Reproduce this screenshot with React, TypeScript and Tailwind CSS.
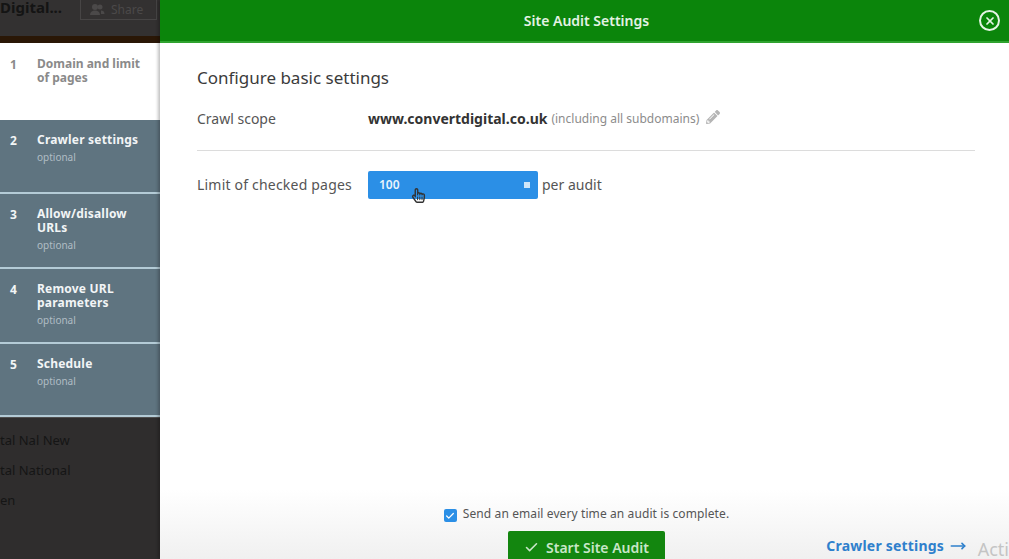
import { Check, MoveRight, X } from "lucide-react";
import { FaPencilAlt, FaRegHandPointer } from "react-icons/fa";

const font = { fontFamily: '"Noto Sans", "Open Sans", sans-serif' };

type Step = { num: number; title: string[]; height: string };

const steps: Step[] = [
  { num: 2, title: ["Crawler settings"], height: "h-[74px]" },
  { num: 3, title: ["Allow/disallow", "URLs"], height: "h-[75px]" },
  { num: 4, title: ["Remove URL", "parameters"], height: "h-[75px]" },
  { num: 5, title: ["Schedule"], height: "h-[73px]" },
];

const StepItem = ({ step }: { step: Step }) => (
  <div
    className={`flex shrink-0 border-b-2 border-[#b4cbd6] bg-[#5f7480] pl-[10px] pt-[13px] last:border-b-0 ${step.height}`}
  >
    <span className="w-[27px] text-[12px] leading-[16px] font-bold text-[#f2f5f6]">
      {step.num}
    </span>
    <div>
      {step.title.map((line) => (
        <div
          key={line}
          className="text-[12px] leading-[14px] font-bold tracking-[0.2px] text-[#f2f5f6]"
        >
          {line}
        </div>
      ))}
      <div className="mt-[3px] text-[10px] leading-[14px] text-[#b0bdc4]">
        optional
      </div>
    </div>
  </div>
);

const Sidebar = () => (
  <div className="flex h-full w-[160px] shrink-0 flex-col bg-[#2f2d2d]">
    <div className="flex h-[36px] shrink-0 items-start justify-between bg-[#333131] pr-[3px]">
      <span className="mt-[-3px] text-[15px] leading-[20px] font-bold text-[#141414]">
        Digital...
      </span>
      <div className="flex h-[20px] w-[77px] items-center gap-[6px] border border-[#474545] border-t-0 pl-[8px] text-[12px] leading-[14px] text-[#4b4949]">
        <svg width="16" height="13" viewBox="0 0 16 13" fill="#4b4949">
          <circle cx="6" cy="4" r="3" />
          <circle cx="11" cy="4" r="2.5" />
          <path d="M1 12c0-3 2-4.500 5-4.500s5 1.500 5 4.500z" />
          <path d="M12 7.500c2 0 3.500 1 3.500 3.500H12z" />
        </svg>
        Share
      </div>
    </div>
    <div className="h-[7px] shrink-0 bg-[#2a1706]" />
    <div className="flex h-[77px] shrink-0 bg-white pl-[10px] pt-[14px]">
      <span className="w-[27px] text-[12px] leading-[16px] font-bold text-[#8a8a8a]">
        1
      </span>
      <div className="text-[12px] leading-[14px] font-bold text-[#8a8a8a]">
        Domain and limit
        <br />
        of pages
      </div>
    </div>
    {steps.map((step) => (
      <StepItem key={step.num} step={step} />
    ))}
    <div className="flex flex-1 flex-col gap-[12px] border-t border-[#4f4e4e] pt-[13px] text-[13px] leading-[18px] text-[#151515]">
      <span>tal Nal New</span>
      <span>tal National</span>
      <span>en</span>
    </div>
  </div>
);

export default function App() {
  return (
    <div
      className="relative flex h-[559px] w-[1009px] overflow-hidden bg-white"
      style={font}
    >
      <Sidebar />
      <div className="flex h-full flex-1 flex-col shadow-[-2px_0_3px_rgba(0,0,0,0.25)]">
        <header className="relative flex h-[43px] shrink-0 items-center justify-center border-b-2 border-[#2fa32f] bg-[#0b850b] pl-[4px] text-[14px] font-semibold text-[#e4f2e4]">
          Site Audit Settings
          <span className="absolute right-[9px] top-[10px] flex h-[21px] w-[21px] items-center justify-center rounded-full border-2 border-[#e6f4e6]">
            <X size={12} strokeWidth={3.5} className="text-[#e6f4e6]" />
          </span>
        </header>
        <main className="flex-1 pl-[37px] pr-[34px] pt-[22px]">
          <h1 className="text-[17px] leading-[26px] text-[#3b3b3b]">
            Configure basic settings
          </h1>
          <div className="mt-[18px] flex h-[42px] items-start border-b border-[#dcdcdc] text-[14px] leading-[20px] text-[#555]">
            <span className="w-[171px]">Crawl scope</span>
            <span className="font-bold text-[#333]">www.convertdigital.co.uk</span>
            <span className="ml-[4px] text-[12px] text-[#8c8c8c]">
              (including all subdomains)
            </span>
            <FaPencilAlt size={14} className="ml-[7px] mt-[1px] text-[#b5b5b5]" />
          </div>
          <div className="mt-[20px] flex items-center text-[14px] text-[#555]">
            <span className="mb-[2px] w-[171px] tracking-[0.2px]">Limit of checked pages</span>
            <div className="relative flex h-[28px] w-[170px] items-center justify-between rounded-[2px] bg-[#2b8fe6] pl-[11px] pr-[8px] text-[12px] font-semibold text-[#e8f3fc]">
              <span className="mb-[1px]">100</span>
              <span className="h-[6px] w-[6px] bg-[#cfe6f9]" />
              <FaRegHandPointer
                size={15}
                className="absolute left-[43px] top-[17px] fill-[#333] text-[#333]"
              />
            </div>
            <span className="mb-[2px] ml-[4px]">per audit</span>
          </div>
        </main>
        <footer className="relative flex h-[69px] shrink-0 flex-col items-center bg-gradient-to-b from-white to-[#f0f0f0] pl-[4px] pt-[16px]">
          <label className="flex items-center gap-[6px] text-[12px] leading-[16px] tracking-[0.1px] text-[#555]">
            <span className="mt-[3px] flex h-[13px] w-[13px] items-center justify-center rounded-[2px] bg-[#2b8fe6]">
              <Check size={10} strokeWidth={3} className="text-white" />
            </span>
            Send an email every time an audit is complete.
          </label>
          <button className="mt-[9px] flex h-[32px] w-[157px] shrink-0 items-center justify-center gap-[7px] rounded-t-[2px] bg-[#13860f] text-[14px] font-semibold text-[#c8e6c8]">
            <Check size={15} strokeWidth={2.5} />
            Start Site Audit
          </button>
          <div className="absolute bottom-[3px] right-[43px] flex items-center gap-[6px] text-[14px] font-bold tracking-[0.2px] text-[#2f80cc]">
            Crawler settings
            <MoveRight size={16} strokeWidth={2.5} />
          </div>
          <span className="absolute bottom-[-4px] right-[0px] text-[18px] text-[#c4c4c4]">
            Acti
          </span>
        </footer>
      </div>
    </div>
  );
}
